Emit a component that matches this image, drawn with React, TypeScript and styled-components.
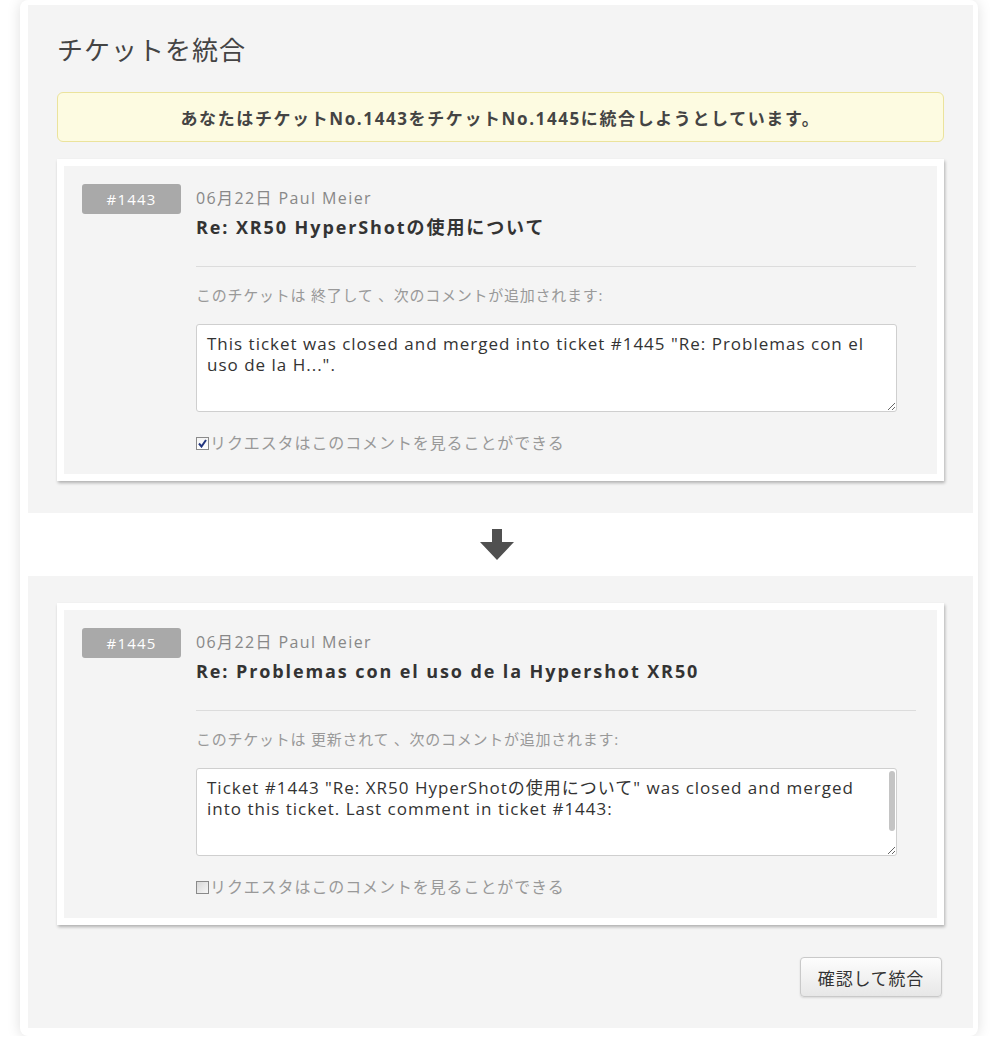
import styled, { createGlobalStyle } from "styled-components";

const GlobalStyle = createGlobalStyle`
    body {
        margin: 0;
        background: #fff;
        font-family: "Open Sans", "Noto Sans CJK JP", sans-serif;
        color: #333;
    }
`

const Panel = styled.div`
    width: 958px;
    margin-left: 20px;
    box-sizing: border-box;
    padding: 5px 5px 8px 8px;
    background: #fff;
    border-radius: 8px;
    box-shadow: 0 1px 14px rgba(0, 0, 0, 0.13);
`

const Section = styled.div<{$top?: boolean}>`
    background: #f4f4f4;
    padding: ${props => props.$top ? "27px 29px 32px" : "27px 29px 31px"};
`

const Title = styled.h1`
    margin: 0;
    font-size: 26px;
    line-height: 36px;
    font-weight: normal;
    letter-spacing: 1px;
    color: #444;
`

const Notice = styled.div`
    margin-top: 24px;
    height: 50px;
    box-sizing: border-box;
    display: flex;
    align-items: center;
    justify-content: center;
    background: #fdfbe1;
    border: 1px solid #ebe39c;
    border-radius: 6px;
    font-size: 17px;
    font-weight: bold;
    letter-spacing: 1.6px;
    color: #444;
`

const Card = styled.div<{$gap?: number}>`
    margin-top: ${props => props.$gap ?? 0}px;
    border: 7px solid #fff;
    box-shadow: 1px 2px 3px rgba(0, 0, 0, 0.28);
    background: #f4f4f4;
    display: grid;
    grid-template-columns: 99px 1fr;
    column-gap: 15px;
    padding: 18px 21px 20px 18px;
`

const Badge = styled.div`
    height: 30px;
    line-height: 30px;
    text-align: center;
    background: #a9a9a9;
    color: #fff;
    border-radius: 3px;
    font-size: 15px;
    letter-spacing: 1.2px;
`

const Meta = styled.div`
    font-size: 16px;
    line-height: 28px;
    color: #888;
    letter-spacing: 1.4px;
`

const Subject = styled.div`
    font-size: 18px;
    line-height: 30px;
    font-weight: bold;
    color: #333;
    letter-spacing: 1.9px;
`

const Divider = styled.hr`
    margin: 24px 0 0;
    border: 0;
    border-top: 1px solid #dcdcdc;
`

const Hint = styled.div`
    margin-top: 16px;
    font-size: 15px;
    line-height: 24px;
    color: #999;
    letter-spacing: 0.75px;
`

const CommentWrap = styled.div`
    position: relative;
    margin-top: 17px;
    width: 701px;
`

const Comment = styled.textarea<{$scroll?: boolean}>`
    display: block;
    width: 701px;
    height: 88px;
    box-sizing: border-box;
    padding: ${props => props.$scroll ? "8px 36px 8px 10px" : "8px 10px"};
    border: 1px solid #cfcfcf;
    border-radius: 3px;
    background: #fff;
    font-family: "Open Sans", "Noto Sans CJK JP", sans-serif;
    font-size: 17px;
    line-height: 21px;
    letter-spacing: 1px;
    color: #333;
    overflow: hidden;
`

const ScrollThumb = styled.div`
    position: absolute;
    top: 3px;
    right: 2px;
    width: 6px;
    height: 60px;
    border-radius: 3px;
    background: #c4c4c4;
    pointer-events: none;
`

const CheckRow = styled.label`
    margin-top: 20px;
    display: flex;
    align-items: center;
    font-size: 16px;
    line-height: 22px;
    color: #999;
    letter-spacing: 0.9px;
`

const Box = styled.span<{$checked?: boolean}>`
    width: 13px;
    height: 13px;
    box-sizing: border-box;
    margin-right: 1px;
    border: 1px solid #8a8a8a;
    background: ${props => props.$checked
        ? "linear-gradient(#f4f4f4, #fff)"
        : "linear-gradient(135deg, #d8d8d8, #f7f7f7)"};
    display: flex;
    align-items: center;
    justify-content: center;
`

const ArrowBand = styled.div`
    height: 63px;
    padding-right: 8px;
    display: flex;
    align-items: center;
    justify-content: center;
`

const Actions = styled.div`
    margin-top: 32px;
    display: flex;
    justify-content: flex-end;
`

const ConfirmButton = styled.button`
    width: 142px;
    height: 40px;
    margin-right: 2px;
    border: 1px solid #c9c9c9;
    border-radius: 4px;
    background: linear-gradient(#fdfdfd, #e7e7e7);
    box-shadow: 0 1px 2px rgba(0, 0, 0, 0.12);
    font-family: "Open Sans", "Noto Sans CJK JP", sans-serif;
    font-size: 17px;
    letter-spacing: 0.8px;
    color: #333;
    cursor: pointer;
`

interface TicketProps {
    id: string,
    subject: string,
    hint: string,
    comment: string,
    visible: boolean,
    scroll?: boolean,
    gap?: number
}

function Ticket({id, subject, hint, comment, visible, scroll, gap}: TicketProps) {
    return (
        <Card $gap={gap}>
            <Badge>{id}</Badge>
            <div>
                <Meta>06月22日 Paul Meier</Meta>
                <Subject>{subject}</Subject>
                <Divider />
                <Hint>{hint}</Hint>
                <CommentWrap>
                    <Comment $scroll={scroll} defaultValue={comment} />
                    {scroll && <ScrollThumb />}
                </CommentWrap>
                <CheckRow>
                    <Box $checked={visible}>
                        {visible && (
                            <svg width="9" height="9" viewBox="0 0 9 9">
                                <path d="M1 4.5 L3.5 7.5 L8 1" fill="none" stroke="#22357e" strokeWidth="2" />
                            </svg>
                        )}
                    </Box>
                    リクエスタはこのコメントを見ることができる
                </CheckRow>
            </div>
        </Card>
    )
}

export default function App() {
    return (
        <>
            <GlobalStyle />
            <Panel>
                <Section $top>
                    <Title>チケットを統合</Title>
                    <Notice>あなたはチケットNo.1443をチケットNo.1445に統合しようとしています。</Notice>
                    <Ticket
                        gap={17}
                        id="#1443"
                        subject="Re: XR50 HyperShotの使用について"
                        hint="このチケットは 終了して 、次のコメントが追加されます:"
                        comment={'This ticket was closed and merged into ticket #1445 "Re: Problemas con el uso de la H...".'}
                        visible={true}
                    />
                </Section>
                <ArrowBand>
                    <svg width="34" height="31" viewBox="0 0 34 31">
                        <path d="M12 0 H22 V13 H34 L17 31 L0 13 H12 Z" fill="#505050" />
                    </svg>
                </ArrowBand>
                <Section>
                    <Ticket
                        id="#1445"
                        subject="Re: Problemas con el uso de la Hypershot XR50"
                        hint="このチケットは 更新されて 、次のコメントが追加されます:"
                        comment={'Ticket #1443 "Re: XR50 HyperShotの使用について" was closed and merged into this ticket. Last comment in ticket #1443:'}
                        visible={false}
                        scroll={true}
                    />
                    <Actions>
                        <ConfirmButton>確認して統合</ConfirmButton>
                    </Actions>
                </Section>
            </Panel>
        </>
    )
}
